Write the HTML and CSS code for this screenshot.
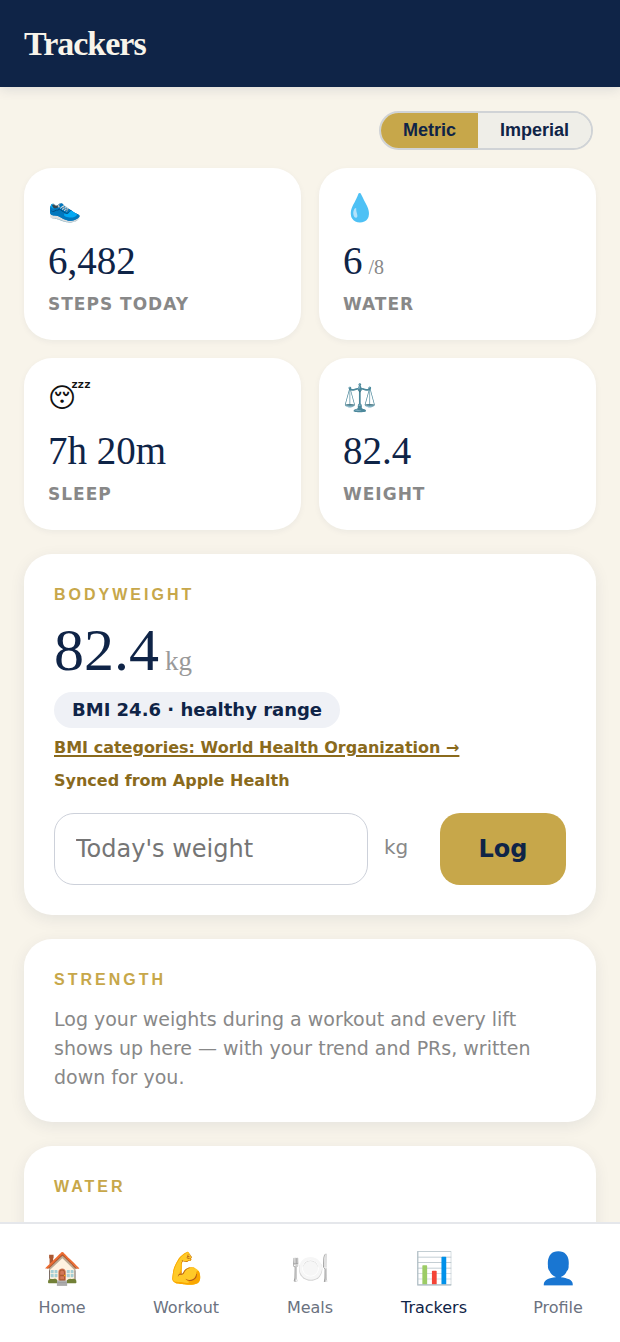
FILE: index.html
```html
<!DOCTYPE html>
<html lang="en">
  <head>
    <meta charset="UTF-8" />
    <meta name="viewport" content="width=device-width, initial-scale=1.0" />
    <title>Trackers</title>
    <link rel="stylesheet" href="styles.css">
  </head>
  <body>
    <div class="app">
      <header class="topbar">
        <h1>Trackers</h1>
      </header>

      <main class="content">
        <div class="units">
          <button class="unit active" type="button">Metric</button>
          <button class="unit" type="button">Imperial</button>
        </div>

        <section class="stats">
          <div class="stat">
            <div class="stat-icon">👟</div>
            <div class="stat-value">6,482</div>
            <div class="stat-label">Steps today</div>
          </div>
          <div class="stat">
            <div class="stat-icon">💧</div>
            <div class="stat-value">6<small>/8</small></div>
            <div class="stat-label">Water</div>
          </div>
          <div class="stat">
            <div class="stat-icon">😴</div>
            <div class="stat-value">7h 20m</div>
            <div class="stat-label">Sleep</div>
          </div>
          <div class="stat">
            <div class="stat-icon">⚖️</div>
            <div class="stat-value">82.4</div>
            <div class="stat-label">Weight</div>
          </div>
        </section>

        <section class="card">
          <h2>Bodyweight</h2>
          <div class="weight">82.4<small>kg</small></div>
          <div class="bmi">BMI 24.6 · healthy range</div>
          <a class="source" href="#">BMI categories: World Health Organization →</a>
          <p class="synced">Synced from Apple Health</p>
          <form class="log">
            <input type="text" id="weight" placeholder="Today's weight" inputmode="decimal">
            <label for="weight">kg</label>
            <button type="button">Log</button>
          </form>
        </section>

        <section class="card">
          <h2>Strength</h2>
          <p class="note">Log your weights during a workout and every lift shows up here — with your trend and PRs, written down for you.</p>
        </section>

        <section class="card">
          <h2>Water</h2>
        </section>
      </main>

      <nav class="tabs">
        <a href="#"><span class="tab-icon">🏠</span>Home</a>
        <a href="#"><span class="tab-icon">💪</span>Workout</a>
        <a href="#"><span class="tab-icon">🍽️</span>Meals</a>
        <a href="#" class="active"><span class="tab-icon">📊</span>Trackers</a>
        <a href="#"><span class="tab-icon">👤</span>Profile</a>
      </nav>
    </div>

    <script>
      const units = document.querySelectorAll(".unit");
      for (const unit of units) {
        unit.addEventListener("click", () => {
          for (const other of units) {
            other.classList.toggle("active", other === unit);
          }
        });
      }
    </script>
  </body>
</html>
```
FILE: styles.css
```css
* {
  box-sizing: border-box;
}

body {
  margin: 0;
  background: #f8f4ea;
  color: #0f2447;
  font-family: "DejaVu Sans", sans-serif;
}

h1,
h2,
p {
  margin: 0;
}

small {
  line-height: 1;
}

.app {
  display: flex;
  flex-direction: column;
  height: 100vh;
}

.topbar {
  flex: none;
  position: relative;
  padding: 24px;
  background: #0f2447;
  box-shadow: 0 2px 12px rgba(15, 36, 71, 0.12);
}

.topbar h1 {
  color: #f8f4ea;
  font-family: "Liberation Serif", serif;
  font-size: 34px;
  line-height: 39px;
  letter-spacing: -1px;
}

.content {
  flex: 1;
  min-height: 0;
  display: flex;
  flex-direction: column;
  gap: 24px;
  padding: 24px;
  overflow-y: auto;
  scrollbar-width: none;
}

.units {
  flex: none;
  display: flex;
  align-self: flex-end;
  margin: 0 3px -6px 0;
  border: 2px solid #d0d3d6;
  border-radius: 20px;
  overflow: hidden;
}

.unit {
  padding: 0 22px;
  border: 0;
  background: #efeee8;
  color: #0f2447;
  font-family: "Liberation Sans", sans-serif;
  font-size: 18px;
  font-weight: bold;
  line-height: 35px;
  cursor: pointer;
}

.unit.active {
  background: #c7a74a;
}

.stats {
  flex: none;
  display: grid;
  grid-template-columns: 1fr 1fr;
  gap: 18px;
}

.stat {
  padding: 24px 24px 26px;
  background: #fff;
  border-radius: 28px;
  box-shadow: 0 2px 6px rgba(15, 36, 71, 0.05);
}

.stat-icon {
  height: 43px;
  font-size: 27px;
  line-height: 32px;
  color: #111;
}

.stat-value {
  font-family: "Liberation Serif", serif;
  font-size: 39px;
  line-height: 52px;
}

.stat-value small {
  margin-left: 6px;
  color: #888;
  font-size: 20px;
}

.stat-label {
  margin-top: 7px;
  color: #888;
  font-size: 17px;
  font-weight: bold;
  line-height: 20px;
  letter-spacing: 1px;
  text-transform: uppercase;
}

.card {
  flex: none;
  display: flex;
  flex-direction: column;
  align-items: flex-start;
  min-height: 180px;
  padding: 30px;
  background: #fff;
  border-radius: 28px;
  box-shadow: 0 4px 16px rgba(15, 36, 71, 0.08);
}

.card h2 {
  color: #c7a74a;
  font-family: "Liberation Sans", sans-serif;
  font-size: 16px;
  line-height: 22px;
  letter-spacing: 3px;
  text-transform: uppercase;
}

.weight {
  margin: 10px 0 8px;
  font-family: "Liberation Serif", serif;
  font-size: 60px;
  line-height: 68px;
}

.weight small {
  margin-left: 6px;
  color: #999;
  font-size: 27px;
}

.bmi {
  padding: 0 18px;
  border-radius: 18px;
  background: #eff1f6;
  font-size: 18px;
  font-weight: bold;
  line-height: 36px;
}

.source,
.synced {
  margin-top: 10px;
  color: #8a6a1c;
  font-size: 16px;
  font-weight: bold;
  line-height: 20px;
}

.source {
  text-decoration-thickness: 2px;
  text-underline-offset: 2px;
}

.synced {
  margin-top: 13px;
}

.log {
  display: flex;
  align-self: stretch;
  align-items: center;
  margin-top: 22px;
}

.log input {
  flex: 1;
  min-width: 0;
  height: 72px;
  padding: 0 21px;
  border: 1px solid #cdd1da;
  border-radius: 20px;
  background: #fff;
  color: #0f2447;
  font: 24px "DejaVu Sans", sans-serif;
}

.log input::placeholder {
  color: #757575;
}

.log label {
  width: 72px;
  padding: 0 0 4px 16px;
  color: #888;
  font-size: 20px;
  line-height: 24px;
}

.log button {
  width: 126px;
  height: 72px;
  border: 0;
  border-radius: 20px;
  background: #c7a74a;
  color: #0f2447;
  font: bold 24px "DejaVu Sans", sans-serif;
  cursor: pointer;
}

.note {
  margin-top: 14px;
  color: #888;
  font-size: 19px;
  line-height: 29px;
}

.tabs {
  flex: none;
  position: relative;
  display: flex;
  height: 120px;
  padding-top: 22px;
  border-top: 2px solid #e5e7eb;
  background: #fff;
}

.tabs a {
  flex: 1;
  display: flex;
  flex-direction: column;
  align-items: center;
  gap: 8px;
  color: #6b7280;
  font-size: 16px;
  line-height: 20px;
  text-decoration: none;
}

.tabs .active {
  color: #0f2447;
}

.tab-icon {
  font-size: 31px;
  line-height: 44px;
}
```
